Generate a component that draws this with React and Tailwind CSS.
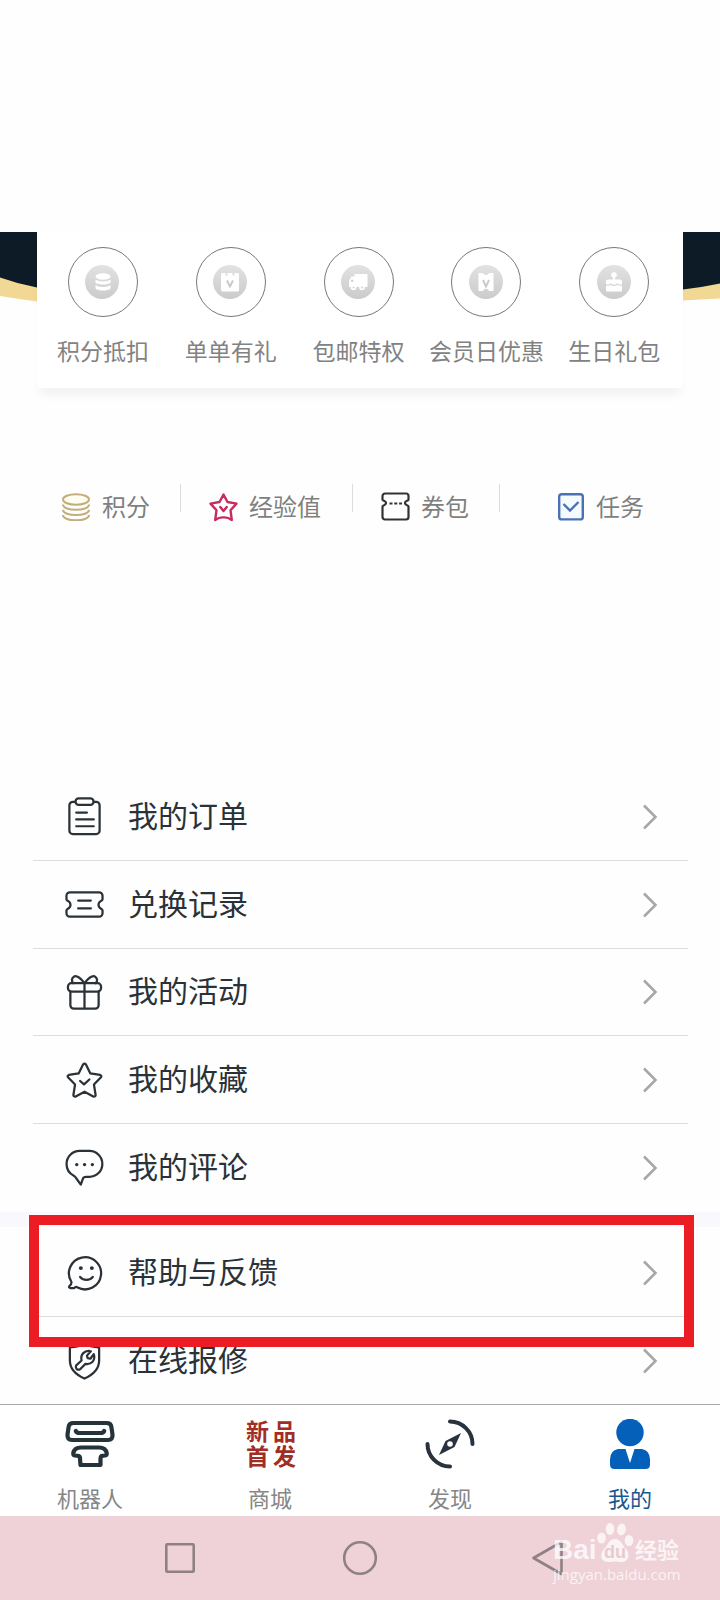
const ink = "#2a3238";

function CoinsBadge() {
  return (
    <g fill="#fff">
      <ellipse cx="18" cy="11.500" rx="7.500" ry="3.200" />
      <path d="M10.500 14.500c3 2.600 12 2.600 15 0v3.200c-3 2.400-12 2.400-15 0z" />
      <path d="M10.500 20c3 2.600 12 2.600 15 0v3.500c-3 2.800-12 2.800-15 0z" />
    </g>
  );
}

function GiftBadge() {
  return (
    <g>
      <path d="M9.500 8h3v2.500h2V8h5v2.500h2V8h3a1.500 1.500 0 0 1 1.500 1.500V25a1.500 1.500 0 0 1-1.500 1.500h-15A1.500 1.500 0 0 1 8 25V9.500A1.500 1.500 0 0 1 9.500 8z" fill="#fff" />
      <path d="M14 15.500l3 6 3-6" fill="none" stroke="#c8c8c8" strokeWidth="1.900" />
    </g>
  );
}

function TruckBadge() {
  return (
    <g fill="#fff">
      <path d="M13.500 9h12a1 1 0 0 1 1 1v12h-13z" />
      <path d="M14 11.500v10.500H8v-6.500l2.500-4z" />
      <circle cx="12.500" cy="22.500" r="2.800" />
      <circle cx="21" cy="22.500" r="2.800" />
      <circle cx="12.500" cy="22.500" r="1" fill="#d2d2d2" />
      <circle cx="21" cy="22.500" r="1" fill="#d2d2d2" />
      <circle cx="11.200" cy="15.800" r="1.300" fill="#d2d2d2" />
    </g>
  );
}

function CouponBadge() {
  return (
    <g>
      <path d="M9.500 8h4.500c1 2.600 5 2.600 6 0h4.500v18H20c-1-2.600-5-2.600-6 0H9.500z" fill="#fff" />
      <path d="M14 15l3 6.500 3-6.500" fill="none" stroke="#c8c8c8" strokeWidth="1.900" />
    </g>
  );
}

function CakeBadge() {
  return (
    <g fill="#fff">
      <circle cx="17" cy="10" r="2.800" />
      <path d="M16 11h2v4h-2z" />
      <path d="M9 16.500a2 2 0 0 1 2-2h12a2 2 0 0 1 2 2V19c-2 1.500-3.500 0-4.500-.5-1.500 0-2 1.300-3.500 1.300s-2-1.300-3.500-1.300C12.500 19 11 20.500 9 19z" />
      <path d="M9 20.500c2 .5 3 0 4.500-.7 1.500 1.500 5.500 1.500 7 0 1.500.7 2.500 1.200 4.500.7V25.500a1 1 0 0 1-1 1H10a1 1 0 0 1-1-1z" />
    </g>
  );
}

const perks = [
  { label: "积分抵扣", Badge: CoinsBadge },
  { label: "单单有礼", Badge: GiftBadge },
  { label: "包邮特权", Badge: TruckBadge },
  { label: "会员日优惠", Badge: CouponBadge },
  { label: "生日礼包", Badge: CakeBadge },
];

function Perk({ label, Badge }) {
  return (
    <div className="flex w-[127.850px] flex-col items-center">
      <div className="flex size-[70px] items-center justify-center rounded-full border border-[#777] pb-px pr-px">
        <svg width="34" height="34" viewBox="0 0 34 34">
          <defs>
            <linearGradient id="perk-fill" x1="0" y1="0" x2="0" y2="1">
              <stop offset="0" stopColor="#e2e2e2" />
              <stop offset="1" stopColor="#cbcbcb" />
            </linearGradient>
          </defs>
          <circle cx="17" cy="17" r="17" fill="url(#perk-fill)" />
          <Badge />
        </svg>
      </div>
      <span className="mt-4 whitespace-nowrap text-[23px] leading-[34px] text-[#828282]">{label}</span>
    </div>
  );
}

function LeftBannerEdge() {
  return (
    <svg width="37" height="80" viewBox="0 0 37 80">
      <path d="M0 0h37v69.500Q18 67 0 64z" fill="#f1d995" />
      <path d="M0 0h37v55.500Q18 52 0 45.500z" fill="#0d1b27" />
    </svg>
  );
}

function RightBannerEdge() {
  return (
    <svg width="37" height="80" viewBox="0 0 37 80">
      <path d="M0 0h37v66.500L0 68.500z" fill="#f1d995" />
      <path d="M0 0h37v51.500Q18 55.500 0 57.500z" fill="#0d1b27" />
    </svg>
  );
}

function PerksPanel() {
  return (
    <section className="flex h-[156px]">
      <LeftBannerEdge />
      <div className="h-full w-[646px] rounded-b bg-white shadow-[0_10px_10px_-3px_rgba(0,0,0,0.05)]">
        <div className="ml-0.5 flex pt-[15px]">
          {perks.map((perk) => (
            <Perk key={perk.label} {...perk} />
          ))}
        </div>
      </div>
      <RightBannerEdge />
    </section>
  );
}

function StatDivider() {
  return <div className="-mt-[18px] h-7 w-px bg-[#dcdcdc]" />;
}

function StatsRow() {
  return (
    <section className="flex h-[34px] items-center text-2xl leading-none text-[#7f7f7f]">
      <div className="flex w-[180px] items-center gap-3 pl-[62px]">
        <svg width="28" height="28" viewBox="0 0 28 28" fill="none" stroke="#c3ae79" strokeWidth="2" className="-mt-px">
          <ellipse cx="14" cy="6.500" rx="13" ry="5.300" fill="#fffdf0" />
          <path d="M1 11.500c0 7 26 7 26 0M1 16.800c0 7 26 7 26 0M1 22c0 7 26 7 26 0" />
        </svg>
        <span className="-mt-[3px]">积分</span>
      </div>
      <StatDivider />
      <div className="flex w-[171px] items-center gap-[11px] pl-[28px]">
        <svg width="29" height="29" viewBox="0 0 29 29" fill="none" stroke="#c72b60" strokeWidth="2.400" strokeLinejoin="round" strokeLinecap="round">
          <path d="M14.500 1.600l4 7.400 9 1.600-6 6.600 1.300 9.800q-4-3-8.300-2.600-4.300-.4-8.300 2.600l1.300-9.800-6-6.600 9-1.600z" />
          <path d="M11.300 14l3.200 4 3.200-4" />
        </svg>
        <span className="-mt-[3px]">经验值</span>
      </div>
      <StatDivider />
      <div className="flex w-[146px] items-center gap-[11px] pl-[28px]">
        <svg width="29" height="29" viewBox="0 0 29 29" fill="none" stroke="#303236" strokeWidth="2.200" className="-mt-px">
          <path d="M4 1.500h21a2.500 2.500 0 0 1 2.500 2.500v3.500q0 .8-1.500 1.300c-2.800 1.200-2.800 3.200 0 4.400q1.500.5 1.500 1.300v10.500a2.500 2.500 0 0 1-2.500 2.500H4A2.500 2.500 0 0 1 1.500 25V14.500q0-.8 1.500-1.300c2.800-1.200 2.800-3.200 0-4.400q-1.500-.5-1.500-1.300V4A2.500 2.500 0 0 1 4 1.500z" strokeLinejoin="round" />
          <path d="M8.500 11.500h12.500" strokeDasharray="3 1.800" />
        </svg>
        <span className="-mt-[3px]">券包</span>
      </div>
      <StatDivider />
      <div className="flex items-center gap-3 pl-[58px]">
        <svg width="26" height="28" viewBox="0 0 26 28" fill="none" stroke="#4871b8" strokeWidth="2.400" className="-mt-px">
          <rect x="1.200" y="1.200" width="23.600" height="25.200" rx="2.500" fill="#f5fafe" />
          <path d="M5.500 11l6.500 6.500 8.500-8.500" />
        </svg>
        <span className="-mt-[3px]">任务</span>
      </div>
    </section>
  );
}

function OrderIcon() {
  return (
    <>
      <path d="M10.500 5H8a3.500 3.500 0 0 0-3.500 3.500v26A3.500 3.500 0 0 0 8 38h24a3.500 3.500 0 0 0 3.500-3.500v-26A3.500 3.500 0 0 0 32 5h-2.500" />
      <rect x="10.800" y="1.500" width="18.500" height="6.500" rx="3.200" />
      <path d="M11.500 16h11M11.500 23h18M11.500 30h18" />
    </>
  );
}

function TicketIcon() {
  return (
    <>
      <path d="M5 7.500h30a3.500 3.500 0 0 1 3.500 3.500v3.500q0 1-1.500 1.800c-3.500 2-3.500 6 0 8q1.500.8 1.500 1.800V29a3.500 3.500 0 0 1-3.500 3.500H5A3.500 3.500 0 0 1 1.500 29v-2.900q0-1 1.500-1.800c3.500-2 3.500-6 0-8q-1.500-.8-1.500-1.800V11A3.500 3.500 0 0 1 5 7.500z" />
      <path d="M13.500 16h13M13.500 24h13" />
    </>
  );
}

function PresentIcon() {
  return (
    <>
      <rect x="3" y="10.500" width="34" height="8.500" rx="3.500" />
      <path d="M5.500 19v14a3.500 3.500 0 0 0 3.500 3.500h22a3.500 3.500 0 0 0 3.500-3.500V19M20 10.500v26" />
      <path d="M20 10.500C16.500 6 12.500 2.500 9.500 3.500c-3 1.500-3 5-1 7M20 10.500c3.500-4.500 7.500-8 10.500-7 3 1.500 3 5 1 7" />
    </>
  );
}

function FavoriteIcon() {
  return (
    <>
      <path d="M18.500 3.500q1.500-1.800 3 0l4.500 9.200 10 1.600q2 .8.900 2.400l-7.200 7.500 1.700 10.700q-.2 2-2.400 1.600L20 31.500l-9 5q-2.200.4-2.400-1.600l1.700-10.700-7.200-7.500Q2 15.100 4 14.300l10-1.600z" />
      <path d="M15.500 20.500l4 3.500 5.500-5" />
    </>
  );
}

function CommentIcon() {
  return (
    <>
      <path d="M15 3h10a13.300 13.300 0 0 1 0 26.600h-3.500q-2.500 0-3.200 2L16.200 37.500l-4.700-6.500q-1-1.800-2.500-2.600C4 26 1.600 21.500 1.600 16.500 1.600 9 7.500 3 15 3z" />
      <path d="M12 17h.1M20 17h.1M28 17h.1" strokeWidth="3.400" />
    </>
  );
}

function SmileIcon() {
  return (
    <>
      <path d="M6.500 29.500A16.500 16.500 0 1 1 13 35.500Q11 34 9.500 36H5.500q-2-.5-1-2.200 2.500-1.300 2-4.300z" />
      <path d="M16.200 15.500h.1M27.500 15.500h.1" strokeWidth="4" />
      <path d="M15.500 24.500c3.500 4 9.500 4 13 0" />
    </>
  );
}

function RepairIcon() {
  return (
    <>
      <path d="M20 2.500c-4 3-9 4-15 4V20c0 8.500 6 14.500 15 18.500 9-4 15-10 15-18.500V6.500c-6 0-11-1-15-4z" />
      <path d="M11.500 25l5.500-5c-1.500-6 3-11 9.500-9.500l-4 4.500.7 2.500 2.800.7 3.500-4.700c2 6-2 11-8.500 10L15.500 29q-2 1-3.700-.5-1.300-1.800-.3-3.500z" />
    </>
  );
}

function MenuRow({ label, Icon, divider = true }) {
  return (
    <div className="ml-[33px] mr-8 h-[87.750px]">
      <div className="flex h-full items-center pl-8 pr-[29px]">
        <svg width="39" height="39" viewBox="0 0 40 40" fill="none" stroke={ink} strokeWidth="2.300" strokeLinecap="round" strokeLinejoin="round">
          <Icon />
        </svg>
        <span className="-mt-[6px] ml-[24px] flex-1 text-[30px] leading-none text-[#2a3238]">{label}</span>
        <svg width="17" height="26" viewBox="0 0 17 26" fill="none" stroke="#a6a6a6" strokeWidth="2.500">
          <path d="M2 1.500L13.500 13 2 24.500" />
        </svg>
      </div>
      {divider && <div className="-mt-px h-px bg-[#dcdddf]" />}
    </div>
  );
}

function RobotIcon() {
  return (
    <svg width="50" height="50" viewBox="0 0 50 50" fill="none" stroke="#25333b" strokeWidth="4.200" strokeLinejoin="round" strokeLinecap="round">
      <path d="M8.500 4h33q4.300 0 4.800 3.500l1.200 8Q48 21 43 21H7q-5 0-4.500-5.500l1.200-8Q4.200 4 8.500 4z" />
      <path d="M10.800 12q.7 2 4 2h20.400q3.300 0 4-2" />
      <path d="M16 28.500h18c4 0 7 2 7.700 5.500q.3 2-1.700 2.500-2.500 0-3.500.5-1 .5-1 2.500V46h-20l-.5-6.500q0-2-1.300-2.500-1-.5-3.700-.5-2-.5-1.700-2.500c.7-3.500 3.700-5.500 7.700-5.500z" />
    </svg>
  );
}

function NewArrivals() {
  return (
    <div className="h-[50px] pl-[6px] pt-px font-['Liberation_Sans','Noto_Sans_CJK_SC',sans-serif] text-[23px] font-bold leading-[25px] tracking-[4px] text-[#a12d24]">
      新品
      <br />
      首发
    </div>
  );
}

function CompassIcon() {
  return (
    <svg width="50" height="50" viewBox="0 0 50 50" fill="none">
      <path d="M25 2.500A22.500 22.500 0 0 1 47.500 25M25 47.500A22.500 22.500 0 0 1 2.500 25" stroke="#29333d" strokeWidth="4" strokeLinecap="round" />
      <path d="M36 14L29.500 28 14 36 20.500 22z" fill="#29333d" />
      <circle cx="25" cy="25" r="2.800" fill="#fff" />
    </svg>
  );
}

function ProfileIcon() {
  return (
    <svg width="50" height="50" viewBox="0 0 50 50" fill="#0560ba">
      <circle cx="25" cy="13.500" r="13.700" />
      <path d="M13 30h7.500L25 44l4.500-14H37q8 1.500 8 10.500v5q0 4.500-4.500 4.500h-31Q5 50 5 45.500v-5Q5 31.500 13 30z" />
    </svg>
  );
}

const tabs = [
  { label: "机器人", Icon: RobotIcon },
  { label: "商城", Icon: NewArrivals },
  { label: "发现", Icon: CompassIcon },
  { label: "我的", Icon: ProfileIcon, active: true },
];

function TabBar() {
  return (
    <nav className="grid h-28 grid-cols-4 border-t border-[#aaa] bg-white">
      {tabs.map(({ label, Icon, active }) => (
        <div key={label} className="flex flex-col items-center pt-[14px]">
          <Icon />
          <span className={active ? "mt-4 text-[22px] leading-6 text-[#17598f]" : "mt-4 text-[22px] leading-6 text-[#868686]"}>
            {label}
          </span>
        </div>
      ))}
    </nav>
  );
}

function Watermark() {
  return (
    <div className="absolute left-[553px] top-[3px] text-white/75">
      <div className="flex h-[46px] items-end">
        <span className="w-[43px] font-['Liberation_Sans',sans-serif] text-[28px] font-bold leading-[30px]">Bai</span>
        <svg width="38" height="42" viewBox="0 0 38 42" className="mb-0.5 fill-white/75">
          <ellipse cx="5.500" cy="17" rx="4.300" ry="5.500" />
          <ellipse cx="14" cy="8" rx="4.300" ry="6" />
          <ellipse cx="25.500" cy="8.500" rx="4.300" ry="6" transform="rotate(12 25.500 8.500)" />
          <ellipse cx="33" cy="19.500" rx="4.300" ry="5.500" />
          <path d="M19 18c6 0 7 6 11 10 5 6 2 13-4 13-3 0-5-.500-7-.500s-4 .500-7 .500c-7 0-9-7-4-13 4-4 5-10 11-10z" />
          <text x="19" y="37" textAnchor="middle" fontFamily="Liberation Sans, sans-serif" fontSize="18" fontWeight="700" fill="#e9c9d1">du</text>
        </svg>
        <span className="ml-px text-[22px] font-bold leading-[33px]">经验</span>
      </div>
      <div className="-mt-px font-['Open_Sans',sans-serif] text-[15px] leading-5">jingyan.baidu.com</div>
    </div>
  );
}

function SystemBar() {
  return (
    <div className="relative flex h-[84px] items-center bg-[#efd1d8]">
      <svg width="720" height="84" viewBox="0 0 720 84" fill="none" stroke="#8f8084" strokeWidth="2.600">
        <rect x="166.300" y="28.300" width="27.400" height="27.400" rx="1" />
        <circle cx="360" cy="42" r="15.800" />
        <path d="M561.500 26v32L533.500 42z" strokeLinejoin="round" />
      </svg>
      <Watermark />
    </div>
  );
}

export default function App() {
  return (
    <main className="relative flex h-[1600px] w-[720px] flex-col overflow-hidden bg-[#fefefe] pt-[232px] font-['Noto_Sans_CJK_SC',sans-serif]">
      <PerksPanel />
      <div className="mt-[102px]">
        <StatsRow />
      </div>
      <section className="mt-[249px] h-[439px]">
        <MenuRow label="我的订单" Icon={OrderIcon} />
        <MenuRow label="兑换记录" Icon={TicketIcon} />
        <MenuRow label="我的活动" Icon={PresentIcon} />
        <MenuRow label="我的收藏" Icon={FavoriteIcon} />
        <MenuRow label="我的评论" Icon={CommentIcon} divider={false} />
      </section>
      <div className="h-[15px] bg-[#f9f8fd]" />
      <section className="h-[177px] pt-[2px]">
        <MenuRow label="帮助与反馈" Icon={SmileIcon} />
        <MenuRow label="在线报修" Icon={RepairIcon} divider={false} />
      </section>
      <TabBar />
      <SystemBar />
      <div className="absolute left-[29px] top-[1215px] h-[132px] w-[665px] border-10 border-[#eb1c24]" />
    </main>
  );
}
